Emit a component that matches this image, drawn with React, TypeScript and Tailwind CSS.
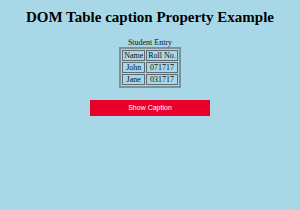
export default function App() {
  const cell = "border border-[#5d6d73] px-[1px] py-0";
  return (
    <div className="min-h-[210px] w-[300px] bg-[#a8d8e8] font-['Liberation_Serif',serif] text-black">
      <h1 className="pt-[7px] text-center text-[15px] font-bold leading-[20px]">DOM Table caption Property Example</h1>
      <div className="mt-[11px] flex justify-center">
        <table className="border-separate border-spacing-[1px] border-2 border-[#7d9198] text-[8px] leading-[9px] text-[#111]">
          <caption className="leading-[9px]">Student Entry</caption>
          <tbody>
            <tr>
              <td className={cell}>Name</td>
              <td className={cell}>Roll No.</td>
            </tr>
            <tr>
              <td className={`${cell} text-center`}>John</td>
              <td className={`${cell} text-center`}>071717</td>
            </tr>
            <tr>
              <td className={`${cell} text-center`}>Jane</td>
              <td className={`${cell} text-center`}>031717</td>
            </tr>
          </tbody>
        </table>
      </div>
      <div className="mt-[12px] flex justify-center">
        <button className="h-[16px] w-[120px] bg-[#e8002a] font-['Liberation_Sans',sans-serif] text-[7px] text-white">Show Caption</button>
      </div>
    </div>
  );
}
